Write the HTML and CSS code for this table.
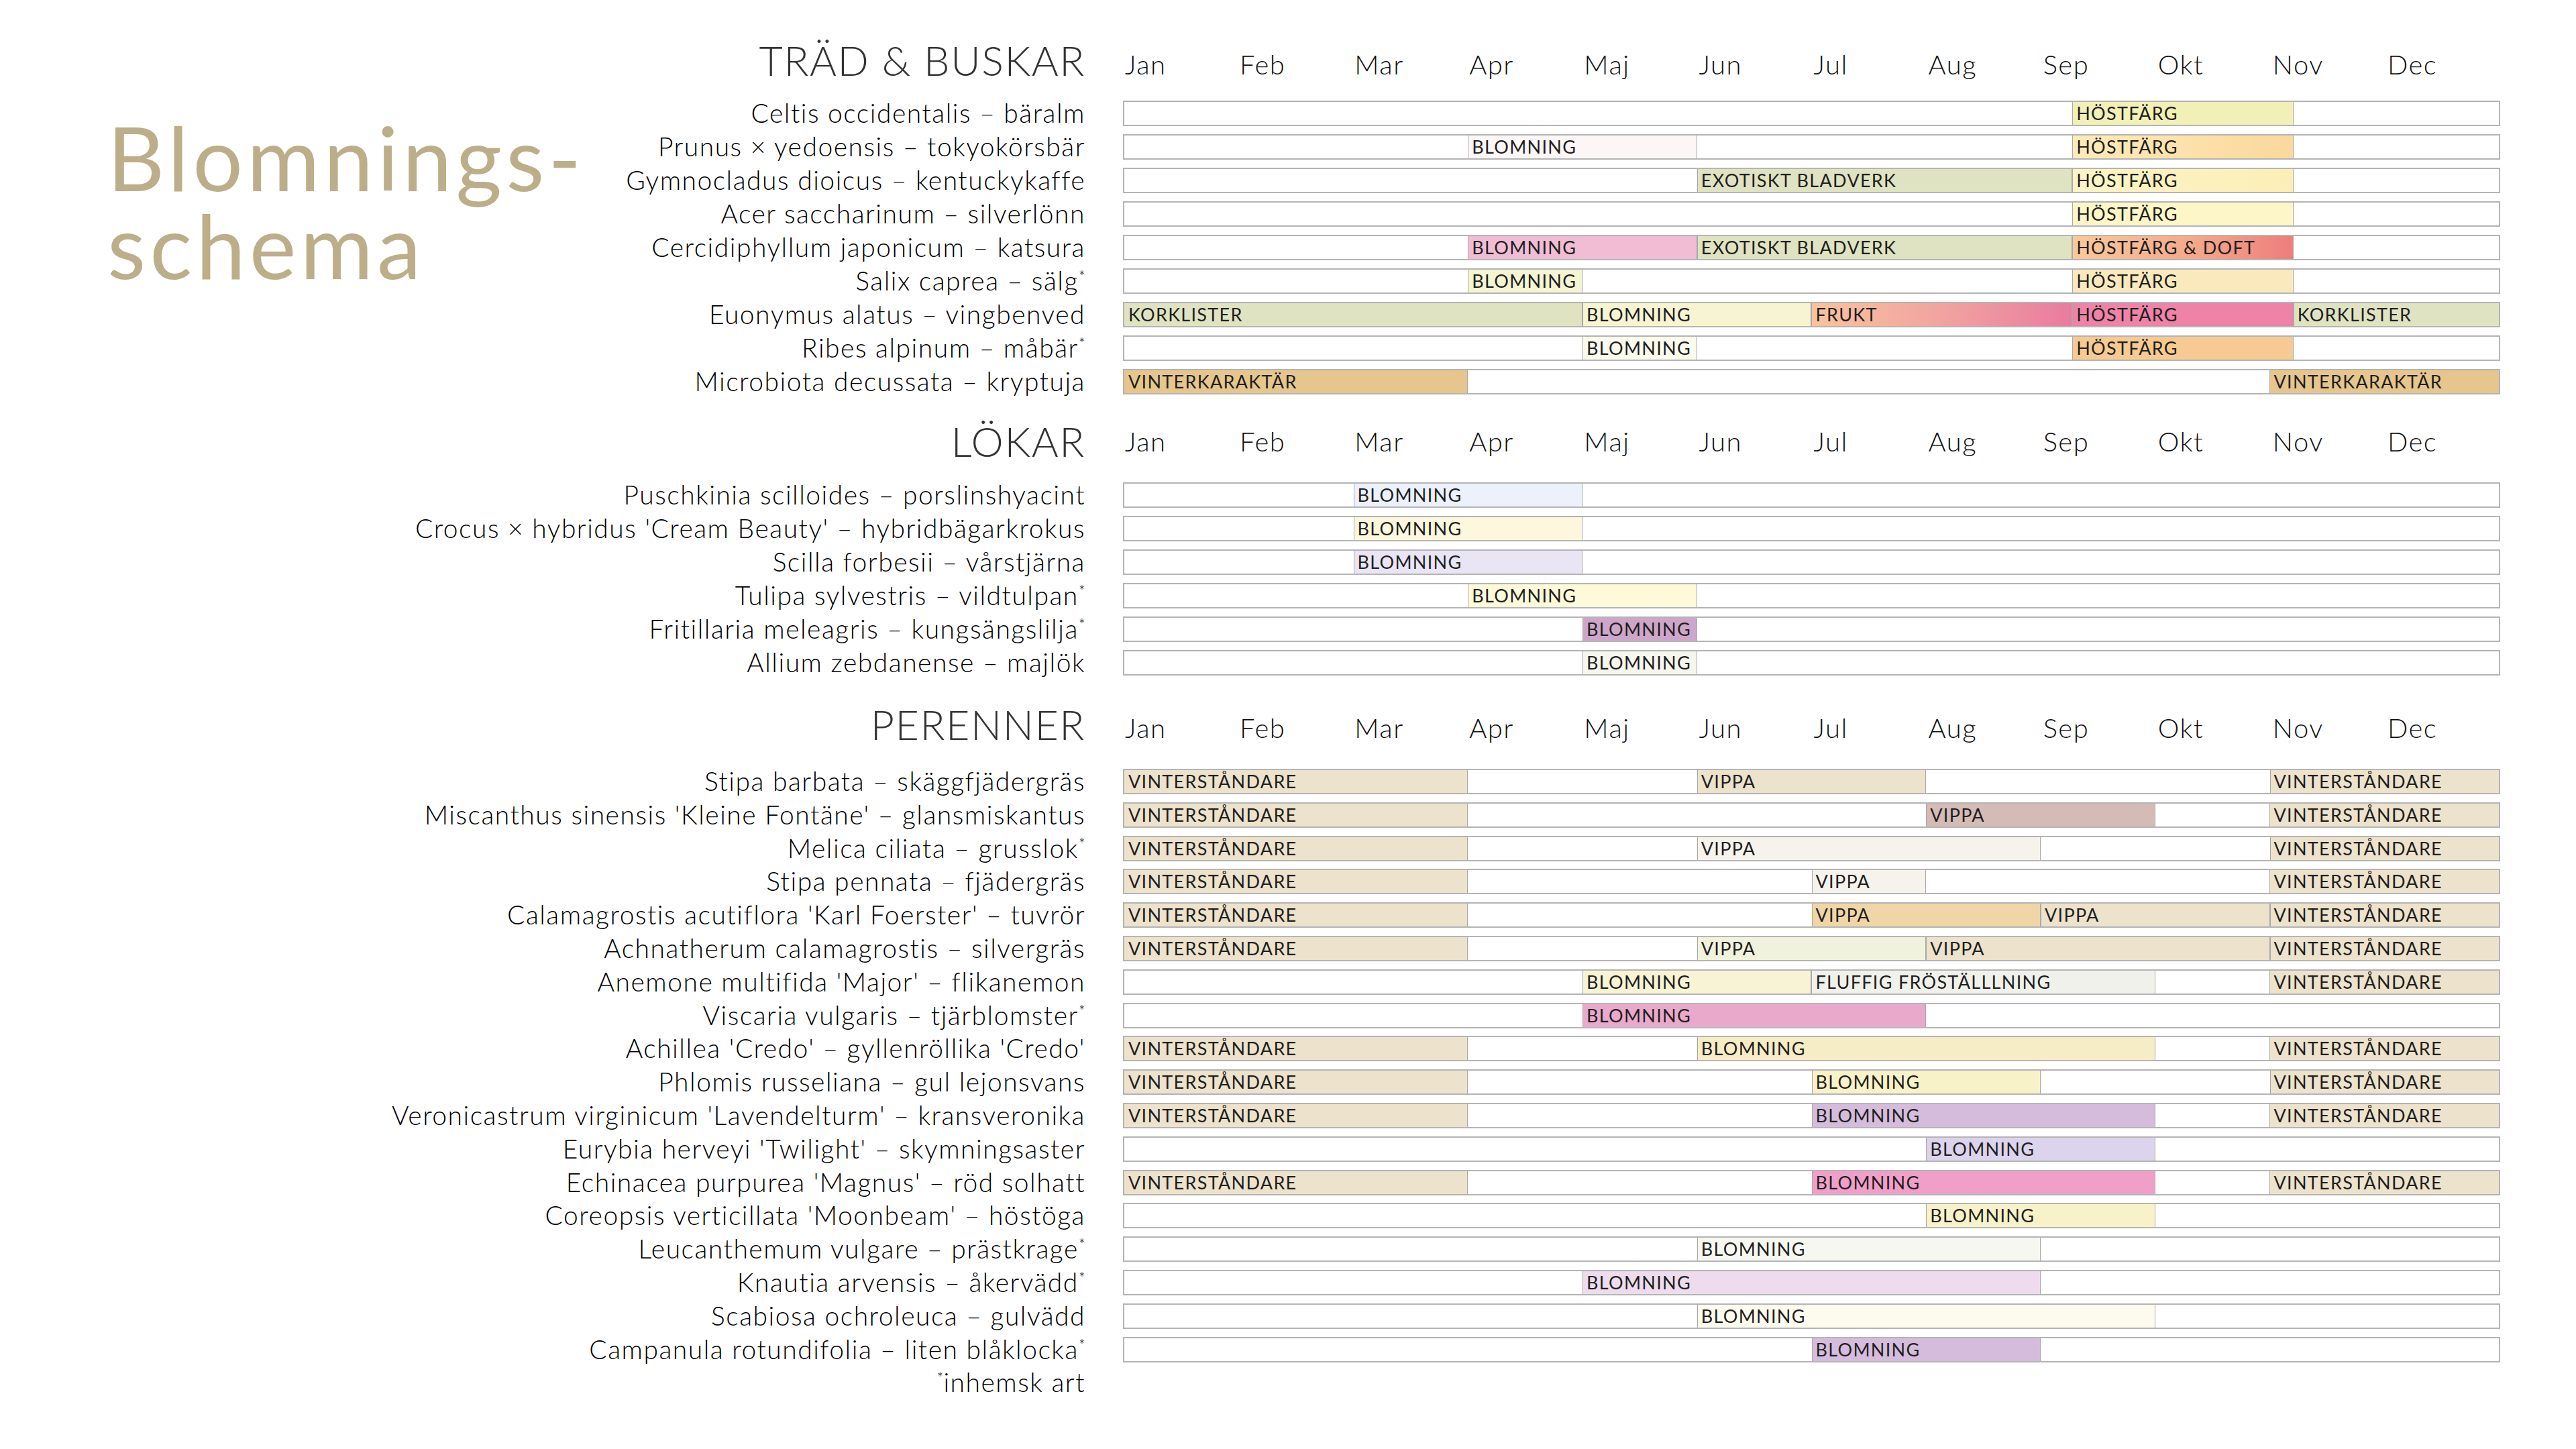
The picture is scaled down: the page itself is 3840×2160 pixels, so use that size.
FILE: index.html
```html
<!DOCTYPE html>
<html lang="sv">
<head>
<meta charset="utf-8">
<title>Blomningsschema</title>
<link rel="stylesheet" href="styles.css">
</head>
<body>
<main class="page">

  <section class="sec sec-trees">
    <h1 class="title"><span class="title-line">Blomnings-</span><span class="title-line">schema</span></h1>
    <div class="chart chart-trees">
      <h2 class="sec-title">TRÄD &amp; BUSKAR</h2>
      <div class="months"><span>Jan</span><span>Feb</span><span>Mar</span><span>Apr</span><span>Maj</span><span>Jun</span><span>Jul</span><span>Aug</span><span>Sep</span><span>Okt</span><span>Nov</span><span>Dec</span></div>

      <div class="label">Celtis occidentalis – bäralm</div>
      <div class="bar"><i class="gap" style="width:68.97%"></i><span class="seg c-t1" style="width:16.08%">HÖSTFÄRG</span></div>

      <div class="label">Prunus × yedoensis – tokyokörsbär</div>
      <div class="bar"><i class="gap" style="width:25%"></i><span class="seg c-t2b" style="width:16.6667%">BLOMNING</span><i class="gap" style="width:27.3033%"></i><span class="seg c-t2" style="width:16.08%">HÖSTFÄRG</span></div>

      <div class="label">Gymnocladus dioicus – kentuckykaffe</div>
      <div class="bar"><i class="gap" style="width:41.6667%"></i><span class="seg c-green" style="width:27.3033%">EXOTISKT BLADVERK</span><span class="seg c-t3" style="width:16.08%">HÖSTFÄRG</span></div>

      <div class="label">Acer saccharinum – silverlönn</div>
      <div class="bar"><i class="gap" style="width:68.97%"></i><span class="seg c-t4" style="width:16.08%">HÖSTFÄRG</span></div>

      <div class="label">Cercidiphyllum japonicum – katsura</div>
      <div class="bar"><i class="gap" style="width:25%"></i><span class="seg c-t5b" style="width:16.6667%">BLOMNING</span><span class="seg c-green" style="width:27.3033%">EXOTISKT BLADVERK</span><span class="seg c-t5" style="width:16.08%">HÖSTFÄRG &amp; DOFT</span></div>

      <div class="label">Salix caprea – sälg<span class="ast">*</span></div>
      <div class="bar"><i class="gap" style="width:25%"></i><span class="seg c-t6b" style="width:8.3333%">BLOMNING</span><i class="gap" style="width:35.6367%"></i><span class="seg c-t6" style="width:16.08%">HÖSTFÄRG</span></div>

      <div class="label">Euonymus alatus – vingbenved</div>
      <div class="bar"><span class="seg c-green" style="width:33.3333%">KORKLISTER</span><span class="seg c-t7b" style="width:16.6667%">BLOMNING</span><span class="seg c-fruit" style="width:18.97%">FRUKT</span><span class="seg c-t7" style="width:16.08%">HÖSTFÄRG</span><span class="seg c-green seg-fill">KORKLISTER</span></div>

      <div class="label">Ribes alpinum – måbär<span class="ast">*</span></div>
      <div class="bar"><i class="gap" style="width:33.3333%"></i><span class="seg c-t8b" style="width:8.3333%">BLOMNING</span><i class="gap" style="width:27.3033%"></i><span class="seg c-t8" style="width:16.08%">HÖSTFÄRG</span></div>

      <div class="label">Microbiota decussata – kryptuja</div>
      <div class="bar"><span class="seg c-vk" style="width:25%">VINTERKARAKTÄR</span><i class="gap" style="width:58.3333%"></i><span class="seg c-vk seg-fill">VINTERKARAKTÄR</span></div>
    </div>
  </section>

  <section class="sec sec-bulbs">
    <div class="chart chart-full">
      <h2 class="sec-title">LÖKAR</h2>
      <div class="months"><span>Jan</span><span>Feb</span><span>Mar</span><span>Apr</span><span>Maj</span><span>Jun</span><span>Jul</span><span>Aug</span><span>Sep</span><span>Okt</span><span>Nov</span><span>Dec</span></div>

      <div class="label">Puschkinia scilloides – porslinshyacint</div>
      <div class="bar"><i class="gap" style="width:16.6667%"></i><span class="seg c-blue" style="width:16.6667%">BLOMNING</span></div>

      <div class="label">Crocus × hybridus 'Cream Beauty' – hybridbägarkrokus</div>
      <div class="bar"><i class="gap" style="width:16.6667%"></i><span class="seg c-cream" style="width:16.6667%">BLOMNING</span></div>

      <div class="label">Scilla forbesii – vårstjärna</div>
      <div class="bar"><i class="gap" style="width:16.6667%"></i><span class="seg c-lav" style="width:16.6667%">BLOMNING</span></div>

      <div class="label">Tulipa sylvestris – vildtulpan<span class="ast">*</span></div>
      <div class="bar"><i class="gap" style="width:25%"></i><span class="seg c-yel" style="width:16.6667%">BLOMNING</span></div>

      <div class="label">Fritillaria meleagris – kungsängslilja<span class="ast">*</span></div>
      <div class="bar"><i class="gap" style="width:33.3333%"></i><span class="seg c-purp" style="width:8.3333%">BLOMNING</span></div>

      <div class="label">Allium zebdanense – majlök</div>
      <div class="bar"><i class="gap" style="width:33.3333%"></i><span class="seg c-offw" style="width:8.3333%">BLOMNING</span></div>
    </div>
  </section>

  <section class="sec sec-perennials">
    <div class="chart chart-full chart-per">
      <h2 class="sec-title">PERENNER</h2>
      <div class="months"><span>Jan</span><span>Feb</span><span>Mar</span><span>Apr</span><span>Maj</span><span>Jun</span><span>Jul</span><span>Aug</span><span>Sep</span><span>Okt</span><span>Nov</span><span>Dec</span></div>

      <div class="label">Stipa barbata – skäggfjädergräs</div>
      <div class="bar"><span class="seg c-vs" style="width:25%">VINTERSTÅNDARE</span><i class="gap" style="width:16.6667%"></i><span class="seg c-vs" style="width:16.6667%">VIPPA</span><i class="gap" style="width:25%"></i><span class="seg c-vs seg-fill">VINTERSTÅNDARE</span></div>

      <div class="label">Miscanthus sinensis 'Kleine Fontäne' – glansmiskantus</div>
      <div class="bar"><span class="seg c-vs" style="width:25%">VINTERSTÅNDARE</span><i class="gap" style="width:33.3333%"></i><span class="seg c-mauve" style="width:16.6667%">VIPPA</span><i class="gap" style="width:8.3333%"></i><span class="seg c-vs seg-fill">VINTERSTÅNDARE</span></div>

      <div class="label">Melica ciliata – grusslok<span class="ast">*</span></div>
      <div class="bar"><span class="seg c-vs" style="width:25%">VINTERSTÅNDARE</span><i class="gap" style="width:16.6667%"></i><span class="seg c-shell" style="width:25%">VIPPA</span><i class="gap" style="width:16.6667%"></i><span class="seg c-vs seg-fill">VINTERSTÅNDARE</span></div>

      <div class="label">Stipa pennata – fjädergräs</div>
      <div class="bar"><span class="seg c-vs" style="width:25%">VINTERSTÅNDARE</span><i class="gap" style="width:25%"></i><span class="seg c-shell" style="width:8.3333%">VIPPA</span><i class="gap" style="width:25%"></i><span class="seg c-vs seg-fill">VINTERSTÅNDARE</span></div>

      <div class="label">Calamagrostis acutiflora 'Karl Foerster' – tuvrör</div>
      <div class="bar"><span class="seg c-vs" style="width:25%">VINTERSTÅNDARE</span><i class="gap" style="width:25%"></i><span class="seg c-gold" style="width:16.6667%">VIPPA</span><span class="seg c-vs" style="width:16.6667%">VIPPA</span><span class="seg c-vs seg-fill">VINTERSTÅNDARE</span></div>

      <div class="label">Achnatherum calamagrostis – silvergräs</div>
      <div class="bar"><span class="seg c-vs" style="width:25%">VINTERSTÅNDARE</span><i class="gap" style="width:16.6667%"></i><span class="seg c-lime" style="width:16.6667%">VIPPA</span><span class="seg c-vs" style="width:25%">VIPPA</span><span class="seg c-vs seg-fill">VINTERSTÅNDARE</span></div>

      <div class="label">Anemone multifida 'Major' – flikanemon</div>
      <div class="bar"><i class="gap" style="width:33.3333%"></i><span class="seg c-cream2" style="width:16.6667%">BLOMNING</span><span class="seg c-fluff" style="width:25%">FLUFFIG FRÖSTÄLLLNING</span><i class="gap" style="width:8.3333%"></i><span class="seg c-vs seg-fill">VINTERSTÅNDARE</span></div>

      <div class="label">Viscaria vulgaris – tjärblomster<span class="ast">*</span></div>
      <div class="bar"><i class="gap" style="width:33.3333%"></i><span class="seg c-pink" style="width:25%">BLOMNING</span></div>

      <div class="label">Achillea 'Credo' – gyllenröllika 'Credo'</div>
      <div class="bar"><span class="seg c-vs" style="width:25%">VINTERSTÅNDARE</span><i class="gap" style="width:16.6667%"></i><span class="seg c-butter" style="width:33.3333%">BLOMNING</span><i class="gap" style="width:8.3333%"></i><span class="seg c-vs seg-fill">VINTERSTÅNDARE</span></div>

      <div class="label">Phlomis russeliana – gul lejonsvans</div>
      <div class="bar"><span class="seg c-vs" style="width:25%">VINTERSTÅNDARE</span><i class="gap" style="width:25%"></i><span class="seg c-lemon" style="width:16.6667%">BLOMNING</span><i class="gap" style="width:16.6667%"></i><span class="seg c-vs seg-fill">VINTERSTÅNDARE</span></div>

      <div class="label">Veronicastrum virginicum 'Lavendelturm' – kransveronika</div>
      <div class="bar"><span class="seg c-vs" style="width:25%">VINTERSTÅNDARE</span><i class="gap" style="width:25%"></i><span class="seg c-lilac" style="width:25%">BLOMNING</span><i class="gap" style="width:8.3333%"></i><span class="seg c-vs seg-fill">VINTERSTÅNDARE</span></div>

      <div class="label">Eurybia herveyi 'Twilight' – skymningsaster</div>
      <div class="bar"><i class="gap" style="width:58.3333%"></i><span class="seg c-aster" style="width:16.6667%">BLOMNING</span></div>

      <div class="label">Echinacea purpurea 'Magnus' – röd solhatt</div>
      <div class="bar"><span class="seg c-vs" style="width:25%">VINTERSTÅNDARE</span><i class="gap" style="width:25%"></i><span class="seg c-rose" style="width:25%">BLOMNING</span><i class="gap" style="width:8.3333%"></i><span class="seg c-vs seg-fill">VINTERSTÅNDARE</span></div>

      <div class="label">Coreopsis verticillata 'Moonbeam' – höstöga</div>
      <div class="bar"><i class="gap" style="width:58.3333%"></i><span class="seg c-lemon" style="width:16.6667%">BLOMNING</span></div>

      <div class="label">Leucanthemum vulgare – prästkrage<span class="ast">*</span></div>
      <div class="bar"><i class="gap" style="width:41.6667%"></i><span class="seg c-ivory" style="width:25%">BLOMNING</span></div>

      <div class="label">Knautia arvensis – åkervädd<span class="ast">*</span></div>
      <div class="bar"><i class="gap" style="width:33.3333%"></i><span class="seg c-blush" style="width:33.3333%">BLOMNING</span></div>

      <div class="label">Scabiosa ochroleuca – gulvädd</div>
      <div class="bar"><i class="gap" style="width:41.6667%"></i><span class="seg c-pale" style="width:33.3333%">BLOMNING</span></div>

      <div class="label">Campanula rotundifolia – liten blåklocka<span class="ast">*</span></div>
      <div class="bar"><i class="gap" style="width:50%"></i><span class="seg c-lilac" style="width:16.6667%">BLOMNING</span></div>

      <div class="label label-note"><span class="ast">*</span>inhemsk art</div>
    </div>
  </section>

</main>
</body>
</html>
```

FILE: styles.css
```css
* { box-sizing: border-box; }

html, body {
  margin: 0;
  padding: 0;
  background: #ffffff;
}

body {
  font-family: "Lato", "Liberation Sans", sans-serif;
  color: #111111;
}

.page {
  width: 3840px;
  height: 2160px;
  padding: 0 113px 0 160px;
  overflow: hidden;
}

/* ---------- sections ---------- */
.sec { display: flex; }

.sec-trees { align-items: flex-start; }

.title {
  flex: 1;
  display: flex;
  flex-direction: column;
  align-items: flex-start;
  margin: 0;
  padding-top: 179px;
  font-family: "Lato", sans-serif;
  font-weight: 400;
  font-size: 132px;
  letter-spacing: 6px;
  color: #bcae89;
}

.title-line {
  display: block;
  height: 131px;
  line-height: 110px;
  overflow: visible;
}

.chart {
  display: grid;
  grid-auto-rows: 50px;
  column-gap: 56px;
  align-items: start;
}

.chart-trees { grid-template-columns: max-content 2053px; }
.chart-full { flex: 1; grid-template-columns: 1fr 2053px; }
.chart-per { grid-auto-rows: 49.8px; }

/* header row */
.sec-title {
  margin: 0;
  align-self: end;
  justify-self: end;
  font-weight: 300;
  font-size: 61px;
  line-height: 61px;
  letter-spacing: 1.6px;
  color: #333333;
}

.months {
  align-self: end;
  display: grid;
  grid-template-columns: repeat(12, 1fr);
  font-weight: 300;
  font-size: 40px;
  line-height: 40px;
  letter-spacing: 1.5px;
  color: #111111;
}
.months span { padding-left: 3px; }

.sec-trees .chart { grid-template-rows: 150px; }
.sec-trees .sec-title { margin-bottom: 30px; }
.sec-trees .months { margin-bottom: 34px; }

.sec-bulbs .chart { grid-template-rows: 119px; }
.sec-bulbs .sec-title { margin-bottom: 31px; }
.sec-bulbs .months { margin-bottom: 41px; }

.sec-perennials .chart { grid-template-rows: 127px; }
.sec-perennials .sec-title { margin-bottom: 36px; }
.sec-perennials .months { margin-bottom: 41px; }

/* rows */
.label {
  justify-self: end;
  white-space: nowrap;
  font-weight: 300;
  font-size: 39px;
  line-height: 36px;
  height: 38px;
  letter-spacing: 1.5px;
  color: #000000;
}

.ast {
  font-size: 24px;
  vertical-align: 12px;
  line-height: 0;
  letter-spacing: 0;
}

.bar {
  display: flex;
  height: 38px;
  border: 2px solid #b4b4b4;
  background: #ffffff;
}

.gap { display: block; flex: none; }

.seg {
  flex: none;
  display: block;
  height: 100%;
  padding-left: 6px;
  white-space: nowrap;
  font-weight: 400;
  font-size: 27px;
  line-height: 34px;
  letter-spacing: 1.3px;
  color: #1f1f1f;
  box-shadow: inset 1px 0 0 #a9a9a9, inset -1px 0 0 #a9a9a9;
}
.seg:first-child { box-shadow: inset -1px 0 0 #a9a9a9; }
.seg-fill { flex: 1; }
.seg-fill:last-child { box-shadow: inset 1px 0 0 #a9a9a9; }

/* ---------- colours: trees ---------- */
.c-green { background: #e0e3c1; }
.c-vk { background: #e6c68d; }
.c-t1 { background: #f2f0b6; }
.c-t2 { background: linear-gradient(to right, #fdebb9, #fbd89c); }
.c-t2b { background: #fdf6f7; }
.c-t3 { background: linear-gradient(to right, #fdf4c6, #fbefb6); }
.c-t4 { background: #fdf6c7; }
.c-t5 { background: linear-gradient(to right, #f9c99b, #f4a98a 55%, #ee7d7d); }
.c-t5b { background: #f0bdd5; }
.c-t6 { background: #fbe9be; }
.c-t6b { background: #f5f4d3; }
.c-t7 { background: #ee82a7; }
.c-t7b { background: #f7f4d2; }
.c-fruit { background: linear-gradient(to right, #f8c49c, #f1a3a0 50%, #ea7ba0); }
.c-t8 { background: #f6ca90; }
.c-t8b { background: #fbfbee; }

/* ---------- colours: bulbs ---------- */
.c-blue { background: #ecf1fb; }
.c-cream { background: #fcf7dd; }
.c-lav { background: #e9e5f5; }
.c-yel { background: #fdf9d9; }
.c-purp { background: #cea6ca; }
.c-offw { background: #f6f6ef; }

/* ---------- colours: perennials ---------- */
.c-vs { background: #ede2cb; }
.c-mauve { background: #d4bbb6; }
.c-shell { background: #f6f3ed; }
.c-gold { background: #f0d6a6; }
.c-lime { background: #f1f2dc; }
.c-cream2 { background: #f8f3d4; }
.c-fluff { background: #f1f1ec; }
.c-pink { background: #e9a9cb; }
.c-butter { background: #f6ecc5; }
.c-lemon { background: #f8f2c8; }
.c-lilac { background: #d5bcdc; }
.c-aster { background: #dcd3ec; }
.c-rose { background: #f0a0c8; }
.c-ivory { background: #f7f7f2; }
.c-blush { background: #eedcee; }
.c-pale { background: #fdfbee; }
```
